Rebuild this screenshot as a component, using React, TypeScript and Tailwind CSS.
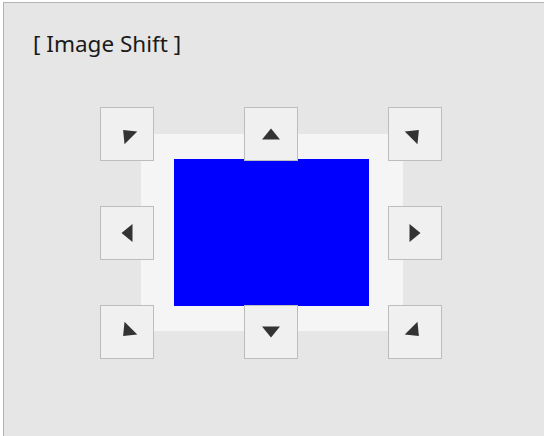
import React from 'react'

type Dir = 'nw' | 'n' | 'ne' | 'w' | 'e' | 'sw' | 's' | 'se'

const ROTATE: Record<Dir, number> = {
    nw: -45,
    n: 0,
    ne: 45,
    w: -90,
    e: 90,
    sw: -135,
    s: 180,
    se: 135,
}

function ArrowButton({ dir }: { dir: Dir }) {
    return (
        <button
            type="button"
            aria-label={`Shift ${dir}`}
            className="flex h-[54px] w-[54px] items-center justify-center border border-[#bdbdbd] bg-[#f0f0f0]"
        >
            <svg width="24" height="24" viewBox="-12 -12 24 24" aria-hidden="true">
                <polygon
                    points="0,-5.5 9,5.5 -9,5.5"
                    fill="#333333"
                    transform={`rotate(${ROTATE[dir]})`}
                />
            </svg>
        </button>
    )
}

export default function App() {
    const dirs: Dir[] = ['nw', 'n', 'ne', 'w', 'e', 'sw', 's', 'se']

    return (
        <div className="h-[436px] w-[544px] overflow-hidden bg-white pl-[3px] pt-[2px]">
            <div className="h-full w-full border-l border-t border-[#b4b4b4] bg-[#e6e6e6]">
                {/* Title */}
                <h2
                    className="pl-[29px] pt-[26px] text-[22.5px] leading-[30px] text-[#1a1a1a]"
                    style={{ fontFamily: '"Noto Sans", "Open Sans", sans-serif' }}
                >
                    [ Image Shift ]
                </h2>

                {/* Shift area */}
                <div className="relative ml-[137px] mt-[75px] w-[262px]">
                    <div className="h-[197px] w-[262px] bg-[#f5f5f5] pl-[33px] pt-[25px]">
                        <div className="h-[147px] w-[195px] bg-[#0000ff]" />
                    </div>

                    <div className="absolute left-[-41px] top-[-27px] grid grid-cols-[54px_54px_54px] gap-x-[90px] gap-y-[45px]">
                        {dirs.slice(0, 4).map((d) => (
                            <ArrowButton key={d} dir={d} />
                        ))}
                        <div />
                        {dirs.slice(4).map((d) => (
                            <ArrowButton key={d} dir={d} />
                        ))}
                    </div>
                </div>
            </div>
        </div>
    )
}
